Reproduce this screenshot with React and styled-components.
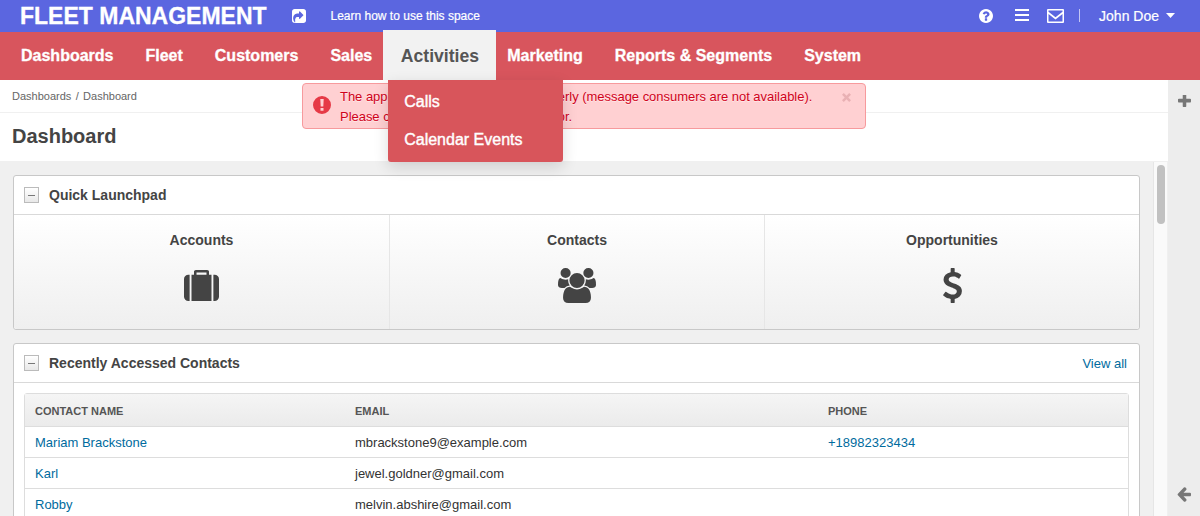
import React from "react";
import styled, { createGlobalStyle } from "styled-components";

const Global = createGlobalStyle`
  * { box-sizing: border-box; }
  body {
    margin: 0;
    overflow: hidden;
    background: #fff;
    color: #444;
    font: 13px/20px "Liberation Sans", Arial, sans-serif;
  }
`;

const ICONS = {
  share: { box: "128 128 1536 1536", d: "M1005 1197l352-352q19-19 19-45t-19-45l-352-352q-30-31-69-14-40 17-40 59v160q-119 0-216 19.5t-162.5 51-114 79-76.5 95.5-44.5 109-21.5 111.5-5 110.5q0 181 167 404 11 12 25 12 7 0 13-3 22-9 19-33-44-354 62-473 46-52 130-75.5t224-23.5v160q0 42 40 59 12 5 24 5 26 0 45-19zM1664 416v960q0 119-84.5 203.5t-203.5 84.5h-960q-119 0-203.5-84.5t-84.5-203.5v-960q0-119 84.5-203.5t203.5-84.5h960q119 0 203.5 84.5t84.5 203.5z" },
  help: { box: "128 128 1536 1536", d: "M1024 1376v-192q0-14-9-23t-23-9h-192q-14 0-23 9t-9 23v192q0 14 9 23t23 9h192q14 0 23-9t9-23zM1280 704q0-88-55.5-163t-138.5-116-170-41q-243 0-371 213-15 24 8 42l132 100q7 6 19 6 16 0 25-12 53-68 86-92 34-24 86-24 48 0 85.5 26t37.5 59q0 38-20 61t-68 45q-63 28-115.5 86.5t-52.5 125.5v36q0 14 9 23t23 9h192q14 0 23-9t9-23q0-19 21.5-49.5t54.5-49.5q32-18 49-28.5t46-35 44.5-48 28-60.5 12.5-81zM1664 896q0 209-103 385.5t-279.5 279.5-385.5 103-385.5-103-279.5-279.5-103-385.5 103-385.5 279.5-279.5 385.5-103 385.5 103 279.5 279.5 103 385.5z" },
  menu: { box: "0 0 14 12", d: "M0 0h14v2H0zM0 5h14v2H0zM0 10h14v2H0z" },
  mail: { box: "0 0 17 14", d: "M1 0h15q1 0 1 1v12q0 1-1 1H1q-1 0-1-1V1q0-1 1-1zM1.5 1.5v1.3l7 5.4 7-5.4V1.5zM1.5 5.1v7.4h14V5.1l-7 5.3z" },
  caret: { box: "0 0 10 5", d: "M0 0h10L5 5z" },
  alert: { box: "0 0 18 18", d: "M9 0a9 9 0 1 1 0 18a9 9 0 1 1 0-18zM7.3 3l.4 7.6h2.6L10.700 3zM7.500 12v2.700h3V12z" },
  close: { box: "0 0 9 9", d: "M0 1.800L1.800 0 4.500 2.700 7.200 0 9 1.800 6.300 4.500 9 7.200 7.200 9 4.500 6.300 1.800 9 0 7.200 2.700 4.500z" },
  plus: { box: "192 224 1408 1408", d: "M1600 736v192q0 40-28 68t-68 28h-416v416q0 40-28 68t-68 28h-192q-40 0-68-28t-28-68v-416h-416q-40 0-68-28t-28-68v-192q0-40 28-68t68-28h416v-416q0-40 28-68t68-28h192q40 0 68 28t28 68v416h416q40 0 68 28t28 68z" },
  back: { box: "128 160 1536 1600", d: "M1664 896v128q0 53-32.5 90.5t-84.5 37.5h-704l293 294q38 36 38 90t-38 90l-75 76q-37 37-90 37-52 0-91-37l-651-652q-37-37-37-90 0-52 37-91l651-650q38-38 91-38 52 0 90 38l75 74q38 38 38 91t-38 91l-293 293h704q52 0 84.5 37.5t32.5 90.5z" },
  suitcase: { box: "0 0 1792 1664", d: "M640 256h512v-128h-512v128zM288 256v1408h-64q-92 0-158-66t-66-158v-960q0-92 66-158t158-66h64zM1408 256v1408h-1024v-1408h128v-160q0-40 28-68t68-28h576q40 0 68 28t28 68v160h128zM1792 480v960q0 92-66 158t-158 66h-64v-1408h64q92 0 158 66t66 158z" },
  users: { box: "0 0 1920 1792", d: "M593 896q-162 5-265 128h-134q-82 0-138-40.5t-56-118.5q0-353 124-353 6 0 43.5 21t97.5 42.500 119 21.500q67 0 133-23-5 37-5 66 0 139 81 256zM1664 1533q0 120-73 189.5t-194 69.5h-874q-121 0-194-69.5t-73-189.5q0-53 3.5-103.5t14-109 26.5-108.5 43-97.5 62-81 85.5-53.5 111.5-20q10 0 43 21.5t73 48 107 48 135 21.5 135-21.5 107-48 73-48 43-21.5q61 0 111.5 20t85.5 53.5 62 81 43 97.5 26.5 108.5 14 109 3.5 103.5zM640 256q0 106-75 181t-181 75-181-75-75-181 75-181 181-75 181 75 75 181zM1344 640q0 159-112.5 271.5t-271.5 112.5-271.5-112.5-112.5-271.5 112.5-271.5 271.5-112.5 271.5 112.5 112.5 271.5zM1920 865q0 78-56 118.5t-138 40.5h-134q-103-123-265-128 81-117 81-256 0-29-5-66 66 23 133 23 59 0 119-21.5t97.5-42.5 43.5-21q124 0 124 353zM1792 256q0 106-75 181t-181 75-181-75-75-181 75-181 181-75 181 75 75 181z" },
  dollar: { box: "40 0 944 1792", d: "M978 1185q0 153-99.5 263.5t-258.5 136.5v175q0 14-9 23t-23 9h-135q-13 0-22.5-9.5t-9.5-22.5v-175q-66-9-127.5-31t-101.5-44.5-74-48-46.5-37.5-17.5-18q-17-21-2-41l103-135q7-10 23-12 15-2 24 9l2 2q113 99 243 125 37 8 74 8 81 0 142.5-43t61.5-122q0-28-15-53t-33.5-42-58.5-37.5-66-32-80-32.5q-39-16-61.5-25t-61.5-26.5-62.5-31-56.5-35.5-53.5-42.5-43.5-49-35.5-58-21-66.5-8.5-78q0-138 98-242t255-134v-180q0-13 9.5-22.5t22.5-9.5h135q14 0 23 9t9 23v176q57 6 110.5 23t87 33.5 63.5 37.5 39 29 15 14q17 18 5 38l-81 146q-8 15-23 16-14 3-27-7-3-3-14.5-12t-39-26.5-58.5-32-74.5-26-85.5-11.5q-95 0-155 43t-60 111q0 26 8.5 48t29.5 41.5 39.5 33 56 31 60.5 27 70 27.5q53 20 81 31.5t76 35 75.5 42.5 62 50 53 63.5 31.5 76.5 13 94z" },
};

const Svg = styled.svg`
  display: block;
  flex: none;
  fill: currentColor;
`;

const Icon = ({ name, w, h = w }) => (
  <Svg width={w} height={h} viewBox={ICONS[name].box} preserveAspectRatio="none" aria-hidden="true">
    <path fillRule="evenodd" d={ICONS[name].d} />
  </Svg>
);

const Page = styled.div`
  position: relative;
  display: flex;
  flex-direction: column;
  width: 1200px;
  height: 516px;
  overflow: hidden;
`;

const TopBar = styled.header`
  display: flex;
  align-items: center;
  height: 32px;
  flex: none;
  padding: 0 25px 0 20px;
  background: #5b66e0;
  color: #fff;
`;

const Brand = styled.div`
  width: 271.500px;
  font-size: 23px;
  font-weight: 700;
  line-height: 32px;
  white-space: nowrap;
  -webkit-text-stroke: 0.3px;
`;

const SpaceLink = styled.a`
  margin-left: 25px;
  font-size: 12px;
  -webkit-text-stroke: 0.2px;
`;

const UserTools = styled.div`
  display: flex;
  align-items: center;
  margin-left: auto;
`;

const ToolSlot = styled.span`
  margin-right: ${(p) => p.$gap}px;
  padding-bottom: ${(p) => p.$lift || 0}px;
`;

const Divider = styled.i`
  width: 1px;
  height: 13px;
  margin: 0 19px 2px 0;
  background: #c3c6f4;
`;

const UserName = styled.span`
  margin-right: 7px;
  font-size: 14px;
  -webkit-text-stroke: 0.2px;
`;

const Nav = styled.nav`
  display: flex;
  align-items: flex-end;
  height: 48px;
  flex: none;
  padding-left: 5px;
  background: #d8555d;
  color: #fff;
`;

const NavItem = styled.a`
  padding: 0 16px;
  font-size: 16px;
  font-weight: 700;
  line-height: 48px;
  white-space: nowrap;
  -webkit-text-stroke: 0.3px;
`;

const ActiveItem = styled(NavItem)`
  position: relative;
  z-index: 2;
  width: 113px;
  height: 50.5px;
  margin: 0 -5px;
  padding: 0 0 0 17.6px;
  background: #f2f2f2;
  color: #555;
  font-size: 17.6px;
  line-height: 53px;
  -webkit-text-stroke: 0;
`;

const Dropdown = styled.div`
  position: absolute;
  z-index: 3;
  top: 50.5px;
  left: 5px;
  display: flex;
  flex-direction: column;
  width: 175px;
  height: 82px;
  padding: 3px 16px;
  border-radius: 0 0 3px 3px;
  background: #d8555b;
  box-shadow: 0 5px 15px rgba(0, 0, 0, 0.14);
`;

const DropdownItem = styled.a`
  color: #fff;
  font-size: 16px;
  font-weight: 400;
  line-height: 38px;
  -webkit-text-stroke: 0.4px;
`;

const Body = styled.div`
  display: flex;
  flex: 1;
  min-height: 0;
`;

const Main = styled.main`
  display: flex;
  flex-direction: column;
  width: 1168px;
`;

const Breadcrumbs = styled.div`
  height: 33px;
  flex: none;
  padding-left: 12px;
  border-bottom: 1px solid #f0f0f0;
  color: #666;
  font-size: 11px;
  line-height: 32px;
  word-spacing: 1.3px;
`;

const PageTitle = styled.h1`
  height: 48px;
  flex: none;
  margin: 0;
  padding-left: 12px;
  font-size: 20px;
  line-height: 46px;
`;

const Scroller = styled.div`
  display: flex;
  flex: 1;
  min-height: 0;
  background: #f0f0f0;
`;

const Panels = styled.div`
  display: flex;
  flex-direction: column;
  gap: 13px;
  width: 1153px;
  padding: 14px 13px 0;
`;

const Track = styled.div`
  width: 14px;
  margin-top: 1px;
  padding: 3px 2px 0 3px;
  border-left: 1px solid #e6e6e6;
  background: #fafafa;
`;

const Thumb = styled.div`
  width: 8px;
  height: 59px;
  border-radius: 4px;
  background: #c1c1c1;
`;

const Rail = styled.aside`
  display: flex;
  flex-direction: column;
  align-items: center;
  justify-content: space-between;
  width: 32px;
  padding: 15px 0 14px;
  background: #ededed;
  color: #777;
`;

const Panel = styled.section`
  flex: none;
  border: 1px solid #c8c8c8;
  border-radius: 3px;
  background: #fff;
`;

const PanelHead = styled.div`
  display: flex;
  align-items: center;
  height: 39px;
  padding: 0 12px 0 10px;
  border-bottom: 1px solid #d9d9d9;
`;

const Toggle = styled.span`
  display: flex;
  align-items: center;
  justify-content: center;
  width: 15px;
  height: 16px;
  border: 1px solid #bbb;
  background: linear-gradient(#fff, #e8e8e8);

  &::before {
    content: "";
    width: 7px;
    height: 1px;
    background: #777;
  }
`;

const PanelTitle = styled.h2`
  flex: 1;
  margin: 0 0 0 10px;
  font-size: 14px;
`;

const Link = styled.a`
  color: #006b9e;
`;

const ViewAll = styled(Link)`
  margin-top: 2px;
`;

const Launchpad = styled.div`
  display: grid;
  grid-template-columns: 375px 375px 1fr;
  height: 114px;
  border-radius: 0 0 3px 3px;
  background: linear-gradient(#fff, #efefef);
`;

const LaunchItem = styled.div`
  display: flex;
  flex-direction: column;
  align-items: center;
  padding-top: 15px;
  font-size: 14px;
  font-weight: 700;

  & + & {
    border-left: 1px solid #e6e6e6;
  }
`;

const LaunchIcon = styled.div`
  display: flex;
  align-items: center;
  height: 36px;
  margin-top: 17px;
`;

const Grid = styled.div`
  height: 200px;
  margin: 10px 10px 0;
  border: 1px solid #ddd;
  border-radius: 3px 3px 0 0;
`;

const Row = styled.div`
  display: grid;
  grid-template-columns: 320px 473px 1fr;
  height: 31px;
  padding-left: 10px;
  border-bottom: 1px solid #ddd;
  line-height: 31px;
  color: #333;
`;

const HeadRow = styled(Row)`
  height: 33px;
  background: linear-gradient(#f5f5f5, #ebebeb);
  color: #555;
  font-size: 11px;
  font-weight: 700;
  line-height: 35px;
`;

const Alert = styled.div`
  position: absolute;
  z-index: 1;
  top: 83px;
  left: 302px;
  display: flex;
  width: 564px;
  height: 46px;
  padding: 3px 14px 0 10px;
  border: 1px solid #f79a9d;
  border-radius: 4px;
  background: #ffd0d2;
  color: #d0021b;
  text-shadow: 0 1px 0 rgba(255, 255, 255, 0.5);
`;

const AlertMark = styled.span`
  margin: 9px 9px 0 0;
  color: #e63946;
`;

const AlertText = styled.p`
  flex: 1;
  margin: 0;
  letter-spacing: -0.03px;
`;

const Close = styled.span`
  margin-top: 6px;
  color: #e9b1b4;
`;

const CONTACTS = [
  { name: "Mariam Brackstone", email: "mbrackstone9@example.com", phone: "+18982323434" },
  { name: "Karl", email: "jewel.goldner@gmail.com" },
  { name: "Robby", email: "melvin.abshire@gmail.com" },
];

export default function App() {
  return (
    <Page>
      <Global />
      <TopBar>
        <Brand>FLEET MANAGEMENT</Brand>
        <Icon name="share" w={14} />
        <SpaceLink>Learn how to use this space</SpaceLink>
        <UserTools>
          <ToolSlot $gap={22} $lift={1}><Icon name="help" w={14} /></ToolSlot>
          <ToolSlot $gap={18} $lift={2}><Icon name="menu" w={14} h={12} /></ToolSlot>
          <ToolSlot $gap={15} $lift={1}><Icon name="mail" w={17} h={14} /></ToolSlot>
          <Divider />
          <UserName>John Doe</UserName>
          <ToolSlot $gap={0} $lift={1}><Icon name="caret" w={9} h={5} /></ToolSlot>
        </UserTools>
      </TopBar>
      <Nav>
        <NavItem>Dashboards</NavItem>
        <NavItem>Fleet</NavItem>
        <NavItem>Customers</NavItem>
        <NavItem>Sales</NavItem>
        <ActiveItem as="div">
          Activities
          <Dropdown>
            <DropdownItem>Calls</DropdownItem>
            <DropdownItem>Calendar Events</DropdownItem>
          </Dropdown>
        </ActiveItem>
        <NavItem>Marketing</NavItem>
        <NavItem>Reports &amp; Segments</NavItem>
        <NavItem>System</NavItem>
      </Nav>
      <Body>
        <Main>
          <Breadcrumbs>Dashboards / Dashboard</Breadcrumbs>
          <PageTitle>Dashboard</PageTitle>
          <Scroller>
            <Panels>
              <Panel>
                <PanelHead>
                  <Toggle />
                  <PanelTitle>Quick Launchpad</PanelTitle>
                </PanelHead>
                <Launchpad>
                  <LaunchItem>
                    Accounts
                    <LaunchIcon><Icon name="suitcase" w={35} h={31} /></LaunchIcon>
                  </LaunchItem>
                  <LaunchItem>
                    Contacts
                    <LaunchIcon><Icon name="users" w={38} h={35} /></LaunchIcon>
                  </LaunchItem>
                  <LaunchItem>
                    Opportunities
                    <LaunchIcon><Icon name="dollar" w={19} h={35} /></LaunchIcon>
                  </LaunchItem>
                </Launchpad>
              </Panel>
              <Panel>
                <PanelHead>
                  <Toggle />
                  <PanelTitle>Recently Accessed Contacts</PanelTitle>
                  <ViewAll>View all</ViewAll>
                </PanelHead>
                <Grid>
                  <HeadRow>
                    <span>CONTACT NAME</span>
                    <span>EMAIL</span>
                    <span>PHONE</span>
                  </HeadRow>
                  {CONTACTS.map((c) => (
                    <Row key={c.name}>
                      <Link>{c.name}</Link>
                      <span>{c.email}</span>
                      <Link>{c.phone}</Link>
                    </Row>
                  ))}
                </Grid>
              </Panel>
            </Panels>
            <Track><Thumb /></Track>
          </Scroller>
        </Main>
        <Rail>
          <Icon name="plus" w={13} />
          <Icon name="back" w={14} h={15} />
        </Rail>
      </Body>
      <Alert>
        <AlertMark><Icon name="alert" w={18} /></AlertMark>
        <AlertText>
          The application is not functioning properly (message consumers are not available).
          <br />
          Please contact the system administrator.
        </AlertText>
        <Close><Icon name="close" w={9} /></Close>
      </Alert>
    </Page>
  );
}
